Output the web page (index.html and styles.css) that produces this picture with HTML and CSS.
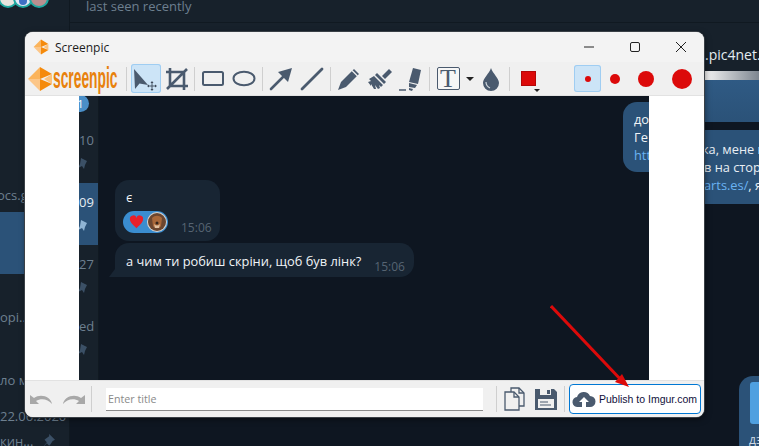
FILE: index.html
```html
<!DOCTYPE html>
<html>

<head>
    <meta charset="UTF-8">
    <title>Screenpic</title>
    <link rel="stylesheet" href="styles.css">
</head>

<body>
    <!-- telegram behind the window -->
    <div class="desktop">
        <div class="sidebar">
            <svg class="avatars" width="56" height="12" viewBox="0 0 56 12">
                <circle cx="8" cy="-2" r="9" fill="#e8e4de" stroke="#1fa8a0" stroke-width="2"/>
                <circle cx="23" cy="-2" r="9" fill="#dfe8f5" stroke="#1fa8a0" stroke-width="2"/>
                <circle cx="39" cy="-2" r="9" fill="#b98f8f" stroke="#1fa8a0" stroke-width="2"/>
                <circle cx="23" cy="1" r="4" fill="#3d6fc4"/>
            </svg>
            <div class="side-row side-first"><span class="side-text">ocs.g</span></div>
            <div class="side-row side-active"></div>
            <div class="side-row side-third"><span class="side-text">opi..</span></div>
            <div class="side-row"><span class="side-text">ло м</span></div>
            <div class="side-row side-last">
                <span class="side-date">22.06.2020</span>
                <span class="side-name">кин...
                    <svg class="side-pin" width="14" height="14" viewBox="0 0 12 12"><path d="M7 0l5 5-2 1-2 3-1 1-2-2-4 4 4-5-2-2 1-1 3-2z" fill="#3b5066"/></svg>
                </span>
            </div>
        </div>
        <div class="main">
            <div class="topbar">last seen recently</div>
            <div class="pinbar"><span class="pin-text">.pic4net.c</span></div>
            <div class="fade"></div>
            <div class="msg-blue msg-one"></div>
            <div class="msg-blue msg-two">
                <div class="msg-cut">ка, мене в</div>
                <div>в на стор</div>
                <div><span class="link">arts.es/</span>, я</div>
            </div>
            <div class="msg-blue msg-three">
                <div class="msg-strip"></div>
                <div class="msg-tail">дз</div>
            </div>
        </div>
    </div>

    <div class="window">
        <div class="titlebar">
            <svg class="title-icon" width="16" height="16" viewBox="0 0 26 26">
                <polygon points="1,13 13,1 13,13" fill="#fbb45c"/>
                <polygon points="13,1 25,8 13,13" fill="#f58a0b"/>
                <polygon points="25,8 25,18 17,13" fill="#fbc27d"/>
                <polygon points="25,18 13,25 13,13" fill="#f58a0b"/>
                <polygon points="13,25 1,13 13,13" fill="#fcc688"/>
            </svg>
            <span class="title-text">Screenpic</span>
            <div class="win-buttons">
                <svg width="46" height="30" viewBox="0 0 46 30"><path d="M18 15h10" stroke="#222" fill="none"/></svg>
                <svg width="46" height="30" viewBox="0 0 46 30"><rect x="18.5" y="10.5" width="9" height="9" rx="1.5" stroke="#222" fill="none"/></svg>
                <svg width="46" height="30" viewBox="0 0 46 30"><path d="M18 10l10 10M28 10l-10 10" stroke="#222" fill="none"/></svg>
            </div>
        </div>
        <div class="toolbar">
            <div class="logo">
                <svg class="logo-mark" width="26" height="26" viewBox="0 0 26 26">
                    <polygon points="1,13 13,1 13,13" fill="#fbb45c"/>
                    <polygon points="13,1 25,8 13,13" fill="#f58a0b"/>
                    <polygon points="25,8 25,18 17,13" fill="#fbc27d"/>
                    <polygon points="25,18 13,25 13,13" fill="#f58a0b"/>
                    <polygon points="13,25 1,13 13,13" fill="#fcc688"/>
                </svg>
                <span class="logo-text">screenpic</span>
            </div>
            <div class="sep sep-logo"></div>
            <div class="tool tool-on">
                <svg width="30" height="29" viewBox="0 0 30 29">
                    <path d="M3 5L17 21 8.500 19.500 4 25z" fill="#4a5a6e"/>
                    <path d="M21 18v8M17 22h8" stroke="#3d4a5a" stroke-width="0.900"/>
                    <path d="M21 17l-1.500 2h3zM21 27l-1.500-2h3zM16 22l2-1.500v3zM26 22l-2-1.500v3z" fill="#3d4a5a"/>
                </svg>
            </div>
            <div class="tool">
                <svg width="24" height="24" viewBox="0 0 24 24"><path d="M5 1v18h18M1 5h18v18M2 22L22 2M5 19L19 5" stroke="#4a5a6e" stroke-width="2.600" fill="none"/></svg>
            </div>
            <div class="sep sep-tight"></div>
            <div class="tool">
                <svg width="24" height="17" viewBox="0 0 24 17"><rect x="2" y="2" width="20" height="13" rx="1.500" stroke="#4a5a6e" stroke-width="2" fill="none"/></svg>
            </div>
            <div class="tool">
                <svg width="24" height="17" viewBox="0 0 24 17"><ellipse cx="12" cy="8.500" rx="10.500" ry="6.800" stroke="#4a5a6e" stroke-width="2" fill="none"/></svg>
            </div>
            <div class="sep"></div>
            <div class="tool">
                <svg width="24" height="24" viewBox="0 0 24 24"><path d="M2 22L17 7" stroke="#4a5a6e" stroke-width="2.600" stroke-linecap="round"/><path d="M23 1l-4 14-10-10z" fill="#4a5a6e"/></svg>
            </div>
            <div class="tool">
                <svg width="24" height="24" viewBox="0 0 24 24"><path d="M2 22L22 2" stroke="#4a5a6e" stroke-width="2.800" stroke-linecap="round"/></svg>
            </div>
            <div class="sep"></div>
            <div class="tool">
                <svg width="24" height="24" viewBox="0 0 24 24"><path d="M1 23l3-8L17 2l5 5L9 20z" fill="#4a5a6e"/><path d="M15 3.500l5.500 5.500" stroke="#f0f0f0" stroke-width="1.200"/></svg>
            </div>
            <div class="tool">
                <svg width="26" height="24" viewBox="0 0 26 24">
                    <path d="M15 9l7-7 3 3-7 7z" fill="#4a5a6e"/>
                    <path d="M10 6l9 9-2 2-9-9z" fill="#4a5a6e"/>
                    <path d="M7 9l9 9-2 2-2-2 1 3-2 1-3-4 1 4-2 0-3-5 0 2-3-4 3-1-2-2z" fill="#4a5a6e"/>
                </svg>
            </div>
            <div class="tool">
                <svg width="26" height="26" viewBox="0 0 26 26"><path d="M15 2l8 2-3 14-9-2z" fill="#4a5a6e"/><path d="M11 17l8 2-2 3-6-1z" fill="#4a5a6e"/><path d="M1 24h7" stroke="#4a5a6e" stroke-width="1.500"/><path d="M11 22l4 1-1 2-3-1z" fill="#4a5a6e"/></svg>
            </div>
            <div class="sep"></div>
            <div class="tool">
                <div class="t-box">T</div>
            </div>
            <div class="caret-slot"><div class="caret"></div></div>
            <div class="tool">
                <svg width="18" height="24" viewBox="0 0 18 24"><path d="M9 1C7 7 1 11 1 16a8 8 0 0 0 16 0C17 11 11 7 9 1z" fill="#4a5a6e"/><path d="M4 15c0 3 2 5 4 6" stroke="#cfd6dd" stroke-width="1.200" fill="none"/></svg>
            </div>
            <div class="sep"></div>
            <div class="tool color-tool">
                <div class="swatch"></div>
                <div class="caret caret-small"></div>
            </div>
            <div class="sizes">
                <div class="size size-on"><span class="dot dot-1"></span></div>
                <div class="size"><span class="dot dot-2"></span></div>
                <div class="size size-mid"><span class="dot dot-3"></span></div>
                <div class="size size-big"><span class="dot dot-4"></span></div>
            </div>
        </div>

        <div class="stage">
            <div class="paper"></div>
            <div class="shot">
                <div class="strip">
                    <div class="badge">1</div>
                    <div class="strip-row"><span>10</span><svg width="10" height="12" viewBox="0 0 10 12"><path d="M3 0l6 3-2 4-1 4-2-3-4 2 2-4z" fill="#3b5066"/></svg></div>
                    <div class="strip-row strip-on"><span>09</span><svg width="10" height="12" viewBox="0 0 10 12"><path d="M3 0l6 3-2 4-1 4-2-3-4 2 2-4z" fill="#8fb4d4"/></svg></div>
                    <div class="strip-row"><span>27</span><svg width="10" height="12" viewBox="0 0 10 12"><path d="M3 0l6 3-2 4-1 4-2-3-4 2 2-4z" fill="#3b5066"/></svg></div>
                    <div class="strip-row"><span>ed</span><svg width="10" height="12" viewBox="0 0 10 12"><path d="M3 0l6 3-2 4-1 4-2-3-4 2 2-4z" fill="#3b5066"/></svg></div>
                </div>
                <div class="chat">
                    <div class="bubble-out">
                        <div>до</div>
                        <div>Ге</div>
                        <div class="link">htt</div>
                    </div>
                    <div class="bubble bubble-react">
                        <div class="bubble-text">є</div>
                        <div class="react-row">
                            <div class="pill">
                                <svg width="15" height="14" viewBox="0 0 18 17"><path d="M9 16C3 11 1 8 1 5a4 4 0 0 1 8-1 4 4 0 0 1 8 1c0 3-2 6-8 11z" fill="#e8202a"/></svg>
                                <svg width="20" height="20" viewBox="0 0 20 20">
                                    <circle cx="10" cy="10" r="10" fill="#d8d4d0"/>
                                    <circle cx="10" cy="10" r="9" fill="#6b4630"/>
                                    <path d="M5 6c3-3 7-3 10 0l-1 8c-2 3-6 3-8 0z" fill="#a9683a"/>
                                    <path d="M7 12c2 2 4 2 6 0l-1 4H8z" fill="#e0c0a0"/>
                                    <circle cx="10" cy="11" r="1.500" fill="#33241c"/>
                                </svg>
                            </div>
                            <span class="time">15:06</span>
                        </div>
                    </div>
                    <div class="bubble bubble-last">
                        <span class="bubble-text">а чим ти робиш скріни, щоб був лінк?</span>
                        <span class="time">15:06</span>
                        <div class="tail"></div>
                    </div>
                </div>
            </div>
            <div class="paper paper-right"></div>
        </div>

        <div class="bottombar">
            <div class="hist">
                <svg width="26" height="14" viewBox="0 0 26 14"><path d="M1 3v9h9l-3-3c5-3 12-2 16 3 -1-7-11-11-18-6z" fill="#a8a8a8"/></svg>
                <svg width="26" height="14" viewBox="0 0 26 14"><path d="M25 3v9h-9l3-3C14 6 7 7 3 12 4 5 14 1 21 6z" fill="#a8a8a8"/></svg>
            </div>
            <div class="sep sep-short sep-hist"></div>
            <input class="title-input" placeholder="Enter title">
            <div class="sep sep-short sep-input"></div>
            <svg class="ico-doc" width="22" height="24" viewBox="0 0 22 24">
                <path d="M7 5V1h8l5 5v13h-5" stroke="#4a5a6e" stroke-width="1.300" fill="none"/>
                <path d="M15 1v5h5" stroke="#4a5a6e" stroke-width="1.300" fill="none"/>
                <path d="M1 5h9l5 5v13H1z" stroke="#4a5a6e" stroke-width="1.300" fill="#f0f0f0"/>
                <path d="M10 5v5h5" stroke="#4a5a6e" stroke-width="1.300" fill="none"/>
            </svg>
            <svg class="ico-save" width="22" height="22" viewBox="0 0 22 22">
                <path d="M0 1h19l3 3v18H0z" fill="#4a5a6e"/>
                <rect x="5" y="1" width="11" height="6" fill="#f0f0f0"/>
                <rect x="12" y="2" width="3" height="4" fill="#4a5a6e"/>
                <rect x="3" y="11" width="16" height="9" fill="#f0f0f0"/>
                <path d="M5 14h8M5 17h11" stroke="#4a5a6e"/>
            </svg>
            <div class="sep sep-short sep-save"></div>
            <button class="publish">
                <svg width="24" height="18" viewBox="0 0 24 18"><path d="M6 17a5 5 0 0 1-1-10 7 7 0 0 1 13-1 5.500 5.500 0 0 1 0 11z" fill="#4a5a6e"/><path d="M12 7l5 5h-3v5h-4v-5H7z" fill="#fff"/></svg>
                <span>Publish to Imgur.com</span>
            </button>
        </div>
    </div>

    <!-- red annotation arrow -->
    <svg class="annotation" width="100" height="100" viewBox="0 0 100 100">
        <path d="M1 1L73 77" stroke="#dc0a0a" stroke-width="3"/>
        <path d="M79 82L65 77 72 69z" fill="#dc0a0a"/>
    </svg>
</body>

</html>
```

FILE: styles.css
```css
body {
    margin: 0;
    width: 759px;
    height: 446px;
    overflow: hidden;
    position: relative;
    font-family: "Open Sans", "Noto Sans", sans-serif;
    background-color: #0e1621;
}

.desktop {
    display: flex;
    width: 759px;
    height: 446px;
}

.sidebar {
    width: 69px;
    height: 446px;
    overflow: hidden;
    background-color: #17212b;
    border-right: 1px solid #101921;
    flex-shrink: 0;
    color: #6d7f8f;
    font-size: 13px;
}

.avatars {
    display: block;
    height: 12px;
}

.side-row {
    height: 62px;
    box-sizing: border-box;
    padding-top: 34px;
    line-height: 20px;
    white-space: nowrap;
    overflow: hidden;
}

.side-first {
    margin-top: 138px;
    padding-top: 35px;
    text-indent: -3px;
}

.side-third {
    padding-top: 33px;
}

.side-active {
    background-color: #2b5278;
}

.side-last {
    padding-top: 8px;
}

.side-date {
    display: block;
    line-height: 20px;
}

.side-name {
    display: flex;
    align-items: center;
    margin-top: 5px;
}

.side-pin {
    margin-left: 8px;
}

.main {
    flex: 1;
    min-width: 0;
}

.topbar {
    height: 22px;
    background-color: #17212b;
    border-bottom: 1px solid #101921;
    padding-left: 16px;
    color: #6d7f8f;
    font-size: 13px;
    line-height: 12px;
}

.pinbar {
    height: 48px;
    background-color: #17212b;
    color: #e4ecf2;
    font-size: 14px;
    padding-left: 635px;
    white-space: nowrap;
    overflow: hidden;
}

.pin-text {
    display: block;
    margin-top: 22px;
    line-height: 20px;
}

.fade {
    height: 9px;
    margin-left: 634px;
    background: linear-gradient(to right, #f6f6f6, #7d8690);
}

.msg-blue {
    background-color: #2b5278;
    margin-left: 634px;
    overflow: hidden;
    white-space: nowrap;
}

.msg-one {
    height: 42px;
    background: linear-gradient(to bottom, #2f5a84, #2b5278);
}

.msg-two {
    margin-top: 8px;
    height: 74px;
    padding-top: 10px;
    box-sizing: border-box;
    color: #e8eef4;
    font-size: 12.800px;
    line-height: 18px;
}

.msg-cut {
    text-indent: -2px;
}

.msg-three {
    position: relative;
    margin-top: 172px;
    margin-left: 669px;
    height: 75px;
    border-radius: 14px 0 0 0;
    color: #d0dbe5;
    font-size: 12px;
}

.msg-strip {
    margin: 6px 0 0 11px;
    height: 42px;
    background-color: #4fa0e0;
    border-radius: 3px 0 0 3px;
}

.msg-tail {
    margin: 7px 0 0 10px;
}

.link {
    color: #6ab3f3;
}

.window {
    position: absolute;
    left: 25px;
    top: 32px;
    width: 679px;
    height: 385px;
    display: flex;
    flex-direction: column;
    background-color: #f0f0f0;
    border-radius: 8px;
    box-shadow: 0 0 0 1px #3a4046, 1px 2px 6px rgba(0, 0, 0, 0.5);
    overflow: hidden;
}

.titlebar {
    height: 30px;
    display: flex;
    align-items: center;
    background-color: #f3f3f3;
    flex-shrink: 0;
}

.title-icon {
    margin-left: 8px;
}

.title-text {
    margin-left: 6px;
    font-size: 12px;
    color: #1c1c1c;
}

.win-buttons {
    margin-left: auto;
    display: flex;
}

.toolbar {
    height: 34px;
    display: flex;
    align-items: center;
    flex-shrink: 0;
    background-color: #f0f0f0;
    border-bottom: 1px solid #e2e2e2;
    box-sizing: border-box;
}

.logo {
    display: flex;
    align-items: center;
    width: 91px;
    margin-left: 2px;
    flex-shrink: 0;
}

.logo-mark {
    flex-shrink: 0;
}

.logo-text {
    display: block;
    flex-shrink: 0;
    font-family: "Liberation Sans", sans-serif;
    font-weight: bold;
    font-size: 23px;
    color: #e8810c;
    transform-origin: left center;
    transform: scale(0.6, 1.25);
    white-space: nowrap;
}

.sep {
    width: 1px;
    height: 24px;
    margin: 0 3px 0 2px;
    background-color: #cfcfcf;
    flex-shrink: 0;
}

.sep-tight {
    margin-left: 1px;
}

.sep-logo {
    margin-left: 8px;
    margin-right: 4px;
}

.tool {
    width: 30px;
    height: 29px;
    margin-right: 1px;
    box-sizing: border-box;
    display: flex;
    align-items: center;
    justify-content: center;
    flex-shrink: 0;
    border-radius: 3px;
}

.tool-on {
    background-color: #cce4f7;
    box-shadow: inset 0 0 0 1px #9fcdf2;
}

.t-box {
    width: 23px;
    height: 23px;
    box-sizing: border-box;
    border: 1px solid #4a5a6e;
    border-radius: 2px;
    background-color: #f6f6f6;
    color: #4a5a6e;
    font-family: "Liberation Serif", serif;
    font-size: 26px;
    line-height: 22px;
    text-align: center;
}

.caret-slot {
    width: 11px;
    display: flex;
    justify-content: center;
    margin-right: 1px;
    flex-shrink: 0;
}

.caret {
    width: 0;
    height: 0;
    border-left: 4px solid transparent;
    border-right: 4px solid transparent;
    border-top: 4px solid #222;
}

.color-tool {
    position: relative;
}

.swatch {
    width: 15px;
    height: 15px;
    background-color: #dc0a0a;
    border: 1px solid #b30808;
    box-sizing: border-box;
}

.caret-small {
    position: absolute;
    right: 3px;
    bottom: 1px;
    border-left-width: 3px;
    border-right-width: 3px;
    border-top-width: 3px;
}

.sizes {
    display: flex;
    align-items: center;
    margin-left: 30px;
}

.size {
    width: 27px;
    height: 27px;
    display: flex;
    align-items: center;
    justify-content: center;
    border-radius: 3px;
    box-sizing: border-box;
}

.size-on {
    background-color: #cce4f7;
    box-shadow: inset 0 0 0 1px #9fcdf2;
}

.size-mid {
    width: 28px;
    margin-left: 4px;
}

.size-big {
    width: 28px;
    margin-left: 8px;
}

.dot {
    display: block;
    border-radius: 50%;
    background-color: #dc0a0a;
}

.dot-1 {
    width: 6px;
    height: 6px;
}

.dot-2 {
    width: 10px;
    height: 10px;
}

.dot-3 {
    width: 16px;
    height: 16px;
}

.dot-4 {
    width: 20px;
    height: 20px;
    flex-shrink: 0;
}

.stage {
    flex: 1;
    min-height: 0;
    display: flex;
}

.paper {
    width: 54px;
    background-color: #fff;
    flex-shrink: 0;
}

.paper-right {
    width: 55px;
}

.shot {
    width: 570px;
    flex-shrink: 0;
    display: flex;
    background-color: #0e1621;
    overflow: hidden;
}

.strip {
    width: 20px;
    flex-shrink: 0;
    background-color: #17212b;
    border-right: 1px solid #101921;
    box-sizing: border-box;
    color: #6d7f8f;
    font-size: 13px;
    overflow: hidden;
}

.badge {
    width: 17px;
    height: 17px;
    margin: -1px 0 9px -7px;
    border-radius: 50%;
    background-color: #4a8fc8;
    color: #fff;
    font-size: 11px;
    line-height: 17px;
    text-align: center;
}

.strip-row {
    height: 62px;
    box-sizing: border-box;
    padding-top: 9px;
    text-align: right;
    padding-right: 9px;
    line-height: 20px;
    white-space: nowrap;
}

.strip-row svg {
    display: block;
    margin: 8px 0 0 -1px;
}

.strip-on {
    background-color: #2b5278;
    color: #e4ecf2;
}

.chat {
    flex: 1;
    display: flex;
    flex-direction: column;
    align-items: flex-start;
    padding: 6px 0 0 16px;
    min-width: 0;
    color: #f0f4f7;
    font-size: 12.830px;
}

.bubble-out {
    align-self: flex-end;
    width: 100px;
    margin-right: -74px;
    height: 70px;
    box-sizing: border-box;
    padding: 8px 0 0 11px;
    border-radius: 14px;
    background-color: #2b5278;
    line-height: 18px;
    white-space: nowrap;
}

.bubble {
    position: relative;
    background-color: #182533;
    border-radius: 14px;
    box-sizing: border-box;
}

.bubble-react {
    margin-top: 8px;
    width: 105px;
    height: 61px;
    padding: 8px 0 0 11px;
}

.bubble-text {
    line-height: 18px;
}

.react-row {
    display: flex;
    align-items: flex-end;
    margin: 5px 0 0 -3px;
}

.pill {
    width: 45px;
    height: 22px;
    box-sizing: border-box;
    padding: 0 1px 0 6px;
    display: flex;
    align-items: center;
    justify-content: space-between;
    border-radius: 11px;
    background-color: #3a8dd0;
}

.time {
    color: #566472;
    font-size: 12px;
    line-height: 14px;
}

.react-row .time {
    margin: 0 0 -2px 13px;
}

.bubble-last {
    margin-top: 2px;
    width: 299px;
    height: 34px;
    padding: 9px 0 0 11px;
    display: flex;
    border-radius: 14px 14px 14px 0;
    white-space: nowrap;
}

.bubble-last .time {
    margin: 8px 0 0 13px;
}

.tail {
    position: absolute;
    left: -6px;
    bottom: 0;
    width: 0;
    height: 0;
    border-left: 6px solid transparent;
    border-bottom: 8px solid #182533;
}

.bottombar {
    height: 37px;
    flex-shrink: 0;
    display: flex;
    align-items: center;
    background-color: #f0f0f0;
    border-top: 1px solid #e2e2e2;
    box-sizing: border-box;
}

.hist {
    display: flex;
    gap: 5px;
    margin-left: 4px;
    flex-shrink: 0;
}

.sep-short {
    height: 26px;
}

.sep-hist {
    margin: 0 14px 0 5px;
}

.title-input {
    width: 377px;
    height: 23px;
    box-sizing: border-box;
    padding: 0 2px;
    border: 0;
    border-bottom: 1px solid #8a8a8a;
    background-color: #fff;
    font-family: "Open Sans", sans-serif;
    font-size: 10.700px;
    flex-shrink: 0;
}

.title-input::placeholder {
    color: #8a8a8a;
}

.sep-input {
    margin: 0 7px 0 13px;
}

.ico-doc {
    flex-shrink: 0;
}

.ico-save {
    margin-left: 9px;
    flex-shrink: 0;
}

.sep-save {
    margin: 0 4px 0 7px;
}

.publish {
    width: 132px;
    height: 30px;
    flex-shrink: 0;
    display: flex;
    align-items: center;
    gap: 3px;
    padding: 0 0 0 2px;
    border: 1px solid #0078d4;
    border-radius: 4px;
    background-color: #fff;
    color: #10103a;
    font-family: "Liberation Sans", sans-serif;
    font-size: 10.500px;
    white-space: nowrap;
}

.annotation {
    position: absolute;
    left: 550px;
    top: 305px;
}
```
